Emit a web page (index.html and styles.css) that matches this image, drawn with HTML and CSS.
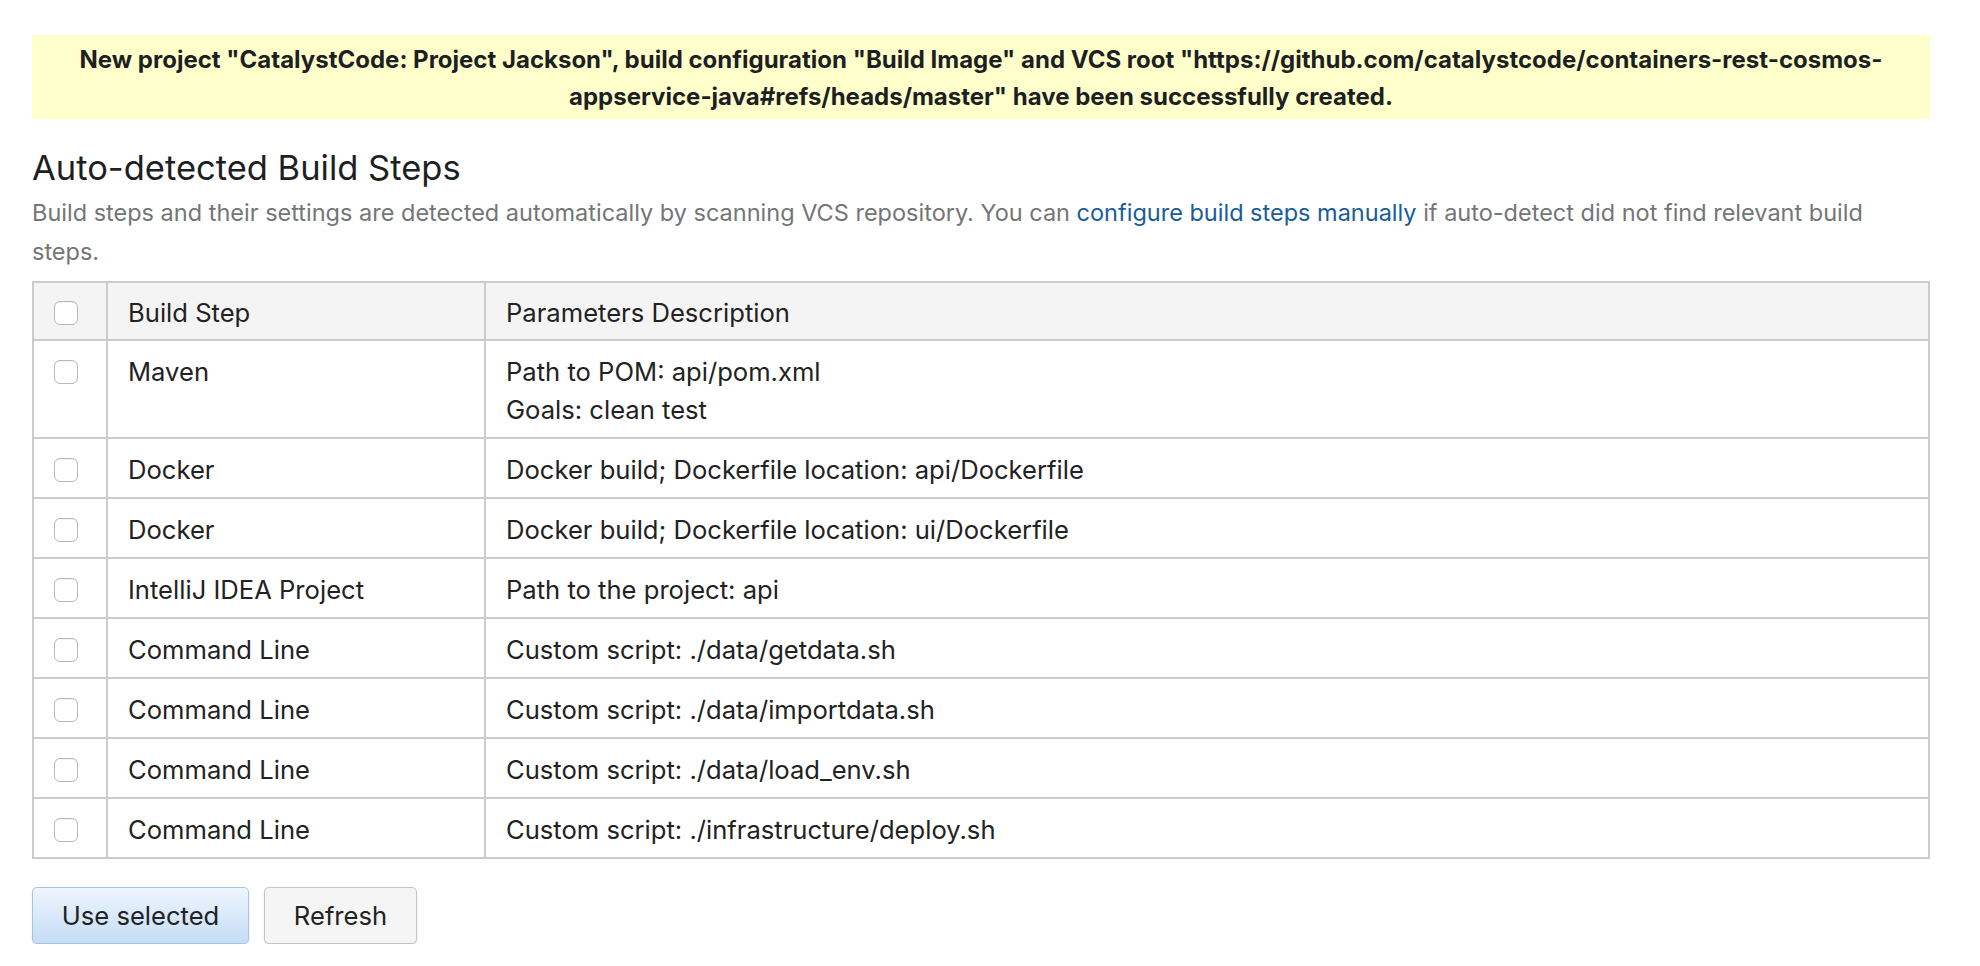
FILE: index.html
```html
<!DOCTYPE html>
<html>
<head>
<meta charset="utf-8">
<link rel="stylesheet" href="styles.css">
</head>
<body>
<div class="page">
  <div class="banner">New project "CatalystCode: Project Jackson", build configuration "Build Image" and VCS root "https://github.com/catalystcode/containers-rest-cosmos-<br>appservice-java#refs/heads/master" have been successfully created.</div>
  <h2 class="title">Auto-detected Build Steps</h2>
  <p class="desc">Build steps and their settings are detected automatically by scanning VCS repository. You can <a class="link" href="#">configure build steps manually</a> if auto-detect did not find relevant build<br>steps.</p>
  <table class="steps">
    <colgroup>
      <col class="c-check">
      <col class="c-step">
      <col class="c-desc">
    </colgroup>
    <thead>
      <tr><th><span class="cb"></span></th><th>Build Step</th><th>Parameters Description</th></tr>
    </thead>
    <tbody>
      <tr><td><span class="cb"></span></td><td>Maven</td><td>Path to POM: api/pom.xml<br>Goals: clean test</td></tr>
      <tr><td><span class="cb"></span></td><td>Docker</td><td>Docker build; Dockerfile location: api/Dockerfile</td></tr>
      <tr><td><span class="cb"></span></td><td>Docker</td><td>Docker build; Dockerfile location: ui/Dockerfile</td></tr>
      <tr><td><span class="cb"></span></td><td>IntelliJ IDEA Project</td><td>Path to the project: api</td></tr>
      <tr><td><span class="cb"></span></td><td>Command Line</td><td>Custom script: ./data/getdata.sh</td></tr>
      <tr><td><span class="cb"></span></td><td>Command Line</td><td>Custom script: ./data/importdata.sh</td></tr>
      <tr><td><span class="cb"></span></td><td>Command Line</td><td>Custom script: ./data/load_env.sh</td></tr>
      <tr><td><span class="cb"></span></td><td>Command Line</td><td>Custom script: ./infrastructure/deploy.sh</td></tr>
    </tbody>
  </table>
  <div class="actions">
    <button class="btn btn-primary">Use selected</button>
    <button class="btn">Refresh</button>
  </div>
</div>
</body>
</html>
```

FILE: styles.css
```css
html, body {
  margin: 0;
  padding: 0;
  background: #ffffff;
}
body {
  font-family: Inter, "Noto Sans", "Liberation Sans", sans-serif;
  color: #222222;
}
.page {
  padding: 35px 50px 0 32px;
}
.banner {
  background: #ffffcc;
  font-weight: 700;
  font-size: 24px;
  line-height: 37px;
  padding: 6px 10px 4px 10px;
  text-align: center;
  color: #1d1f22;
}
.title {
  margin: 27px 0 0 0;
  font-size: 34.5px;
  line-height: 44px;
  font-weight: 400;
  color: #1d1f22;
}
.desc {
  margin: 3px 0 0 0;
  font-size: 23.5px;
  line-height: 39px;
  color: #737577;
}
.link {
  color: #1a5b98;
  text-decoration: none;
}
.steps {
  margin-top: 10px;
  width: 100%;
  border-collapse: collapse;
  table-layout: fixed;
  font-size: 25.6px;
  line-height: 38px;
}
.c-check { width: 74px; }
.c-step { width: 378px; }
.steps th, .steps td {
  border: 2px solid #cccccc;
  padding: 12px 20px 8px 20px;
  text-align: left;
  vertical-align: top;
  font-weight: 400;
  color: #222222;
}
.steps thead th {
  background: #f4f4f4;
  padding-top: 11px;
  padding-bottom: 7px;
}
.cb {
  display: block;
  width: 22px;
  height: 22px;
  margin-top: 7px;
  border: 1px solid #b8b8b8;
  border-radius: 6px;
  background: #ffffff;
  box-shadow: inset 0 1px 1px rgba(0,0,0,0.05);
}
.actions {
  display: flex;
  gap: 15px;
  margin-top: 28px;
}
.btn {
  font-family: Inter, "Noto Sans", "Liberation Sans", sans-serif;
  font-size: 25.6px;
  height: 57px;
  padding: 0;
  border: 1px solid #c4c4c4;
  border-radius: 5px;
  background: #f5f5f5;
  color: #222222;
  box-shadow: 0 1px 2px rgba(0,0,0,0.12);
}
.btn-primary {
  width: 217px;
  background: linear-gradient(#eef5fd, #c5ddf7);
  border-color: #a6c3e2;
}
.btn:not(.btn-primary) {
  width: 153px;
}
```
